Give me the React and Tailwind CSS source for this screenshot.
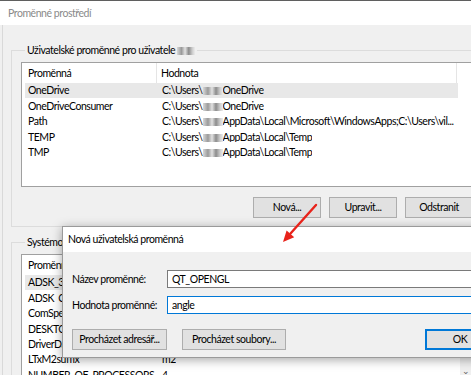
import React from 'react';

const Smudge = ({ className = 'w-[20px]' }) => (
  <span
    className={`inline-block h-[8px] align-[-1px] bg-[linear-gradient(90deg,#d8d8d8,#9a9a9a_25%,#e2e2e2_45%,#8c8c8c_65%,#cdcdcd_85%,#ececec)] blur-[0.6px] ${className}`}
  />
);

const WinButton = ({ children, className = '', primary = false }) => (
  <button
    className={`h-[21px] shrink-0 whitespace-nowrap flex items-center justify-center bg-[#e1e1e1] text-black ${
      primary ? 'border-2 border-[#0078d7]' : 'border border-[#adadad]'
    } ${className}`}
  >
    {children}
  </button>
);

const Row = ({ name, value, selected }) => (
  <div className={`flex items-center h-[15.4px] w-[433px] ml-[3px] whitespace-nowrap ${selected ? 'bg-[#e8e8e8]' : ''}`}>
    <div className="w-[132px] shrink-0 pl-[3px] overflow-hidden">{name}</div>
    <div className="pl-[5px] overflow-hidden">{value}</div>
  </div>
);

const ListHeader = () => (
  <div className="flex h-[20px] items-center">
    <div className="w-[135px] shrink-0 h-full pl-[6px] flex items-center border-r border-[#e5e5e5]">Proměnná</div>
    <div className="w-[300px] shrink-0 h-full pl-[4px] flex items-center border-r border-[#e5e5e5]">Hodnota</div>
  </div>
);

const userVars = [
  { name: 'OneDrive', value: <>C:\Users\<Smudge />OneDrive</>, selected: true },
  { name: 'OneDriveConsumer', value: <>C:\Users\<Smudge />OneDrive</> },
  { name: 'Path', value: <>C:\Users\<Smudge />AppData\Local\Microsoft\WindowsApps;C:\Users\vil...</> },
  { name: 'TEMP', value: <>C:\Users\<Smudge />AppData\Local\Temp</> },
  { name: 'TMP', value: <>C:\Users\<Smudge />AppData\Local\Temp</> },
];

const systemVars = [
  { name: 'ADSK_3DSMAX_x64_2018', value: 'C:\\Program Files\\Autodesk\\3ds Max 2018\\', selected: true },
  { name: 'ADSK_CLM_WPAD_PROXY_CHECK', value: 'FALSE' },
  { name: 'ComSpec', value: 'C:\\WINDOWS\\system32\\cmd.exe' },
  { name: 'DESKTOP_SESSION', value: 'default' },
  { name: 'DriverData', value: 'C:\\Windows\\System32\\Drivers\\DriverData' },
  { name: 'LTxM2suffix', value: 'm2' },
  { name: 'NUMBER_OF_PROCESSORS', value: '4' },
];

export default function App() {
  return (
    <div className="relative w-[471px] h-[375px] overflow-hidden bg-[#f0f0f0] font-['Lato',sans-serif] text-[10.5px] tracking-[-0.45px] leading-none text-black">
      {/* main window */}
      <div className="w-[500px]">
        <div className="h-[25px] bg-white border-t border-[#5f5f5f] pl-[8px] flex items-center text-[#8a8a8a]">
          Proměnné prostředí
        </div>
        <div className="ml-[2px] border-l border-[#d9d9d9] pl-[8px] pt-[18px] h-[350px]">
          <fieldset className="border border-[#dcdcdc] pl-[9px] pb-[8px]">
            <legend className="ml-[4px] px-[2px] leading-[14px]">
              Uživatelské proměnné pro uživatele <Smudge className="w-[18px]" />
            </legend>
            <div className="mt-[5px] h-[125px] bg-white border border-[#a0a0a0]">
              <ListHeader />
              {userVars.map((r) => (
                <Row key={r.name} {...r} />
              ))}
            </div>
            <div className="flex mt-[10px] ml-[232px] gap-[8px]">
              <WinButton className="w-[68px]">Nová...</WinButton>
              <WinButton className="w-[68px]">Upravit...</WinButton>
              <WinButton className="w-[68px]">Odstranit</WinButton>
            </div>
          </fieldset>

          <fieldset className="mt-[8px] border border-[#dcdcdc] pl-[9px] pb-[8px]">
            <legend className="ml-[4px] px-[2px] leading-[14px]">Systémové proměnné</legend>
            <div className="mt-[5px] h-[125px] w-[451px] bg-white border border-[#a0a0a0] flex">
              <div className="flex-1">
                <ListHeader />
                {systemVars.map((r) => (
                  <Row key={r.name} {...r} />
                ))}
              </div>
              <div className="w-[11px] bg-[#f0f0f0] flex flex-col justify-end items-center pb-[3px] text-[9px] text-[#606060]">
                ⌄
              </div>
            </div>
          </fieldset>
        </div>
      </div>

      {/* dialog: Nová uživatelská proměnná */}
      <div className="absolute left-[62px] top-[226px] w-[440px] h-[132px] bg-[#f0f0f0] border border-[#9a9a9a] shadow-[0_2px_10px_rgba(0,0,0,0.35)]">
        <div className="h-[25px] bg-white pl-[5px] flex items-center">Nová uživatelská proměnná</div>
        <div className="pl-[9px] pt-[18px]">
          <div className="flex items-center h-[18px]">
            <div className="w-[95px] shrink-0 whitespace-nowrap">Název proměnné:</div>
            <div className="flex-1 h-full bg-white border-y border-l border-[#7a7a7a] pl-[4px] flex items-center">QT_OPENGL</div>
          </div>
          <div className="flex items-center h-[18px] mt-[8px]">
            <div className="w-[95px] shrink-0 whitespace-nowrap">Hodnota proměnné:</div>
            <div className="flex-1 h-full bg-white border border-[#0078d7] pl-[4px] flex items-center">angle</div>
          </div>
          <div className="flex mt-[15px]">
            <WinButton className="w-[95px]">Procházet adresář...</WinButton>
            <WinButton className="w-[104px] ml-[15px]">Procházet soubory...</WinButton>
            <WinButton primary className="w-[70px] ml-[139px]">OK</WinButton>
          </div>
        </div>
      </div>

      {/* red arrow annotation, drawn over the dialog */}
      <svg className="absolute left-[276px] top-[200px]" width="46" height="48" viewBox="0 0 46 48">
        <line x1="40" y1="5" x2="14.5" y2="33.5" stroke="#e8231b" strokeWidth="2.4" strokeLinecap="round" />
        <polygon points="7,42 18.2,37.2 10.6,30.4" fill="#e8231b" />
      </svg>
    </div>
  );
}
